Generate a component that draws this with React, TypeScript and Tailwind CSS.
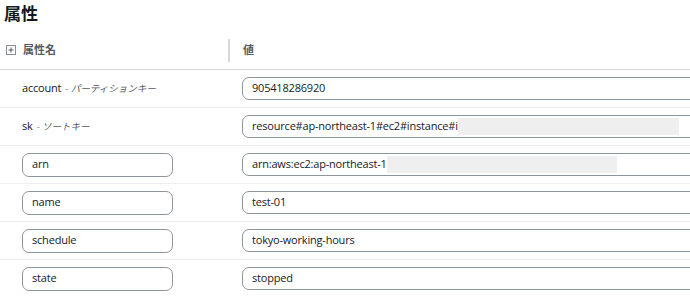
import React from "react";

const font = { fontFamily: '"Open Sans", "Noto Sans CJK JP", sans-serif' };

type Row = {
  key: string;
  hint?: string;
  value: string;
  redact?: number;
};

const rows: Row[] = [
  { key: "account", hint: "- パーティションキー", value: "905418286920" },
  { key: "sk", hint: "- ソートキー", value: "resource#ap-northeast-1#ec2#instance#i", redact: 221 },
  { key: "arn", value: "arn:aws:ec2:ap-northeast-1", redact: 230 },
  { key: "name", value: "test-01" },
  { key: "schedule", value: "tokyo-working-hours" },
  { key: "state", value: "stopped" },
];

function Redact({ w }: { w: number }) {
  return <span className="inline-block h-[17px] bg-[#efefef] align-middle" style={{ width: w }} />;
}

export default function App() {
  return (
    <div className="w-[690px] h-[297px] overflow-hidden bg-white text-[#16191f]" style={font}>
      <div className="w-[740px]">
        <div className="h-[31px] pl-[4px] pt-[2px] text-[17px] font-bold leading-[24px]">属性</div>
        <div className="flex h-[39px] items-center border-b border-[#d5d9da]">
          <div className="flex w-[228px] items-center pl-[6px] h-full">
            <span className="flex h-[10px] w-[10px] items-center justify-center border border-[#8a8f96] text-[9px] leading-none text-[#545b64]">
              <svg width="6" height="6" viewBox="0 0 6 6">
                <path d="M3 0.5v5M0.5 3h5" stroke="#545b64" strokeWidth="1" />
              </svg>
            </span>
            <span className="ml-[7px] text-[11px] font-bold text-[#545b64]">属性名</span>
          </div>
          <div className="h-[23px] w-[2px] bg-[#d5d9da]" />
          <div className="pl-[13px] text-[11px] font-bold text-[#545b64]">値</div>
        </div>
        {rows.map((r) => (
          <div key={r.key} className="flex h-[38px] items-center border-b border-[#eeeeee]">
            <div className="flex w-[228px] items-center pl-[22px]">
              {r.hint ? (
                <div className="flex items-baseline">
                  <span className="text-[11px] tracking-[-0.2px]">{r.key}</span>
                  <span className="ml-[4px] text-[9.5px] italic text-[#545b64]">{r.hint}</span>
                </div>
              ) : (
                <div className="flex h-[24px] w-[151px] items-center rounded-[7px] border border-[#8f959c] pl-[9px] text-[11px] tracking-[-0.2px]">
                  {r.key}
                </div>
              )}
            </div>
            <div className="pl-[14px]">
              <div className="flex h-[23px] w-[470px] items-center rounded-[7px] border border-[#8f959c] pl-[9px] text-[11px] tracking-[-0.2px] whitespace-nowrap">
                <span>{r.value}</span>
                {r.redact ? <Redact w={r.redact} /> : null}
              </div>
            </div>
          </div>
        ))}
      </div>
    </div>
  );
}
